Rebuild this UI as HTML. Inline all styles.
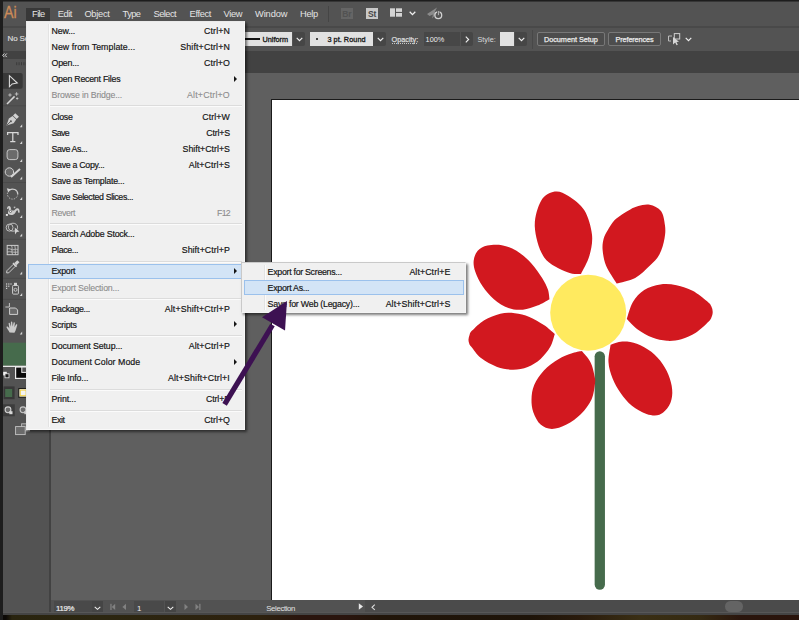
<!DOCTYPE html>
<html><head>
<meta charset="utf-8">
<style>
*{box-sizing:border-box;margin:0;padding:0}
html,body{width:799px;height:620px;overflow:hidden;background:#1b1b1b;font-family:"Liberation Sans",sans-serif;}
#app{position:absolute;left:0;top:0;width:799px;height:620px;overflow:hidden;background:#1d1d1d}
#app div,#app span,#app svg{position:absolute}
/* menubar */
#menubar{left:3px;top:2px;width:796px;height:26px;background:#535353}
#topblend{left:3px;top:1px;width:796px;height:1px;background:#363636}
#mline{left:0;top:24.4px;width:796px;height:1.2px;background:#494949}
#menubar span{top:4.7px;font-size:9.3px;line-height:14px;color:#e4e4e4;white-space:nowrap}
#ai{left:0.6px;top:-1.7px;font-size:16.5px;line-height:24px;color:#cd8b58;letter-spacing:0;transform:scaleX(.86);transform-origin:0 0;-webkit-text-stroke:0.3px #cd8b58}
/* control bar */
#ctrl{left:3px;top:28px;width:796px;height:23px;background:#535353}
#ctrl .t{font-size:8px;line-height:10px;color:#dadada;white-space:nowrap;top:7px}
.fld{background:#e1e1e1;color:#161616;font-size:8px;line-height:14px;white-space:nowrap;height:14px;top:4px}
.dfld{background:#474747;color:#e6e6e6;font-size:8px;line-height:14px;white-space:nowrap;height:14px;top:4px}
.cbtn{background:#464646;height:14px;top:4px;width:12px;border-radius:0 2px 2px 0}
.btn{border:1px solid #787878;border-radius:2px;color:#e6e6e6;font-size:8px;line-height:12px;height:14px;top:4px;text-align:center;white-space:nowrap;background:#4d4d4d}
/* strips */
#strip{left:3px;top:51px;width:796px;height:22px;background:#424242}
#canvas{left:51px;top:73px;width:748px;height:527px;background:#5f5f5f}
#artboard{left:271px;top:99px;width:528px;height:501px;background:#fff;border-left:1.5px solid #1a1a1a;border-top:1.5px solid #1a1a1a}
#tools{left:3px;top:59px;width:46px;height:553px;background:#535353}
#tsep{left:49px;top:73px;width:2px;height:539px;background:#424242}
#status{left:51px;top:600px;width:748px;height:12px;background:#4b4b4b}
#bottom{left:0;top:612px;width:799px;height:8px;background:linear-gradient(#575757 0,#575757 1.2px,#444 1.2px,#444 2.8px,#1b0e05 2.8px,#1b0e05 100%)}
#bottom2{left:0;top:614.8px;width:799px;height:5.2px;background:linear-gradient(90deg,#0c0906 0,#0c0906 6px,#29240f 12px,#2c2610 100px,#2d210e 260px,#2a150e 300px,#2a150e 345px,#211509 380px,#1e1409 530px,#2a1b0c 580px,#3a2f14 640px,#352a12 700px,#2a150c 740px,#2a140c 799px)}
#bottom3{left:0;top:612px;width:3px;height:8px;background:#1d1d1d}
/* menu */
.menu{background:#f0f0f0;border:1px solid #eaeaea;border-right-color:#f8f8f8;border-bottom-color:#f8f8f8;box-shadow:1.5px 1.5px 2.5px rgba(0,0,0,.52)}
.menu .g{left:21px;top:2px;bottom:2px;background:#e3e3e3;border-right:1px solid #fbfbfb;width:2px}
.mi{left:0;right:0;height:16px;font-size:8.8px;line-height:16px;color:#141414;white-space:nowrap;-webkit-text-stroke:0.18px #141414}
.mi .l{left:24.5px;top:0}
.mi .r{right:14.1px;top:0}
.mi.dis{color:#8c8c8c;-webkit-text-stroke:0.1px #8c8c8c}
.sep{left:23px;right:2px;background:#dcdcdc;border-bottom:1px solid #fbfbfb;height:2px}
.arr{right:7.3px;top:4.6px;width:0;height:0;border-left:3.6px solid #161616;border-top:3.1px solid transparent;border-bottom:3.1px solid transparent}
.hl{background:#d3e4f6;border:1px solid #9bc1ec}
</style>
</head>
<body>
<div id="app">
  <div id="topblend"></div>
  <div id="menubar">
    <div id="mline"></div><div id="ai">Ai</div>
    <div id="filehl" style="left:23px;top:5.8px;width:24px;height:12.8px;background:#383838"></div>
    <span style="left: 29.1px; letter-spacing: -0.621px;">File</span>
    <span style="left: 54.8px; letter-spacing: -0.483px;">Edit</span>
    <span style="left: 81.4px; letter-spacing: -0.279px;">Object</span>
    <span style="left: 119.6px; letter-spacing: -0.589px;">Type</span>
    <span style="left: 150.6px; letter-spacing: -0.574px;">Select</span>
    <span style="left: 186.6px; letter-spacing: -0.368px;">Effect</span>
    <span style="left: 220.6px; letter-spacing: -0.396px;">View</span>
    <span style="left: 252px; letter-spacing: -0.113px;">Window</span>
    <span style="left: 297px; letter-spacing: -0.281px;">Help</span>
    <div style="left:325px;top:4px;width:1px;height:16px;background:#454545"></div>
    <div style="left:337.5px;top:6.3px;width:12px;height:10.6px;background:#656565"></div>
<span style="left:339.2px;top:4.8px;font-size:8.5px;color:#525252;font-weight:bold;letter-spacing:-0.2px">Br</span>
<div style="left:363px;top:6.3px;width:11.8px;height:10.6px;background:#c9c9c9"></div>
<span style="left:365px;top:4.8px;font-size:8.5px;color:#474747;font-weight:bold;letter-spacing:-0.2px">St</span>
<svg style="left:387px;top:5.5px" width="13" height="10" viewBox="0 0 13 10">
  <rect x="0" y="0.3" width="5" height="8.4" fill="#d4d4d4"></rect><rect x="6" y="0.3" width="6" height="3.6" fill="#d4d4d4"></rect><rect x="6" y="5" width="6" height="3.7" fill="#d4d4d4"></rect>
</svg>
<svg style="left:405.5px;top:9px" width="7" height="5" viewBox="0 0 7 5"><path d="M0.7,0.8 L3.5,3.6 L6.3,0.8" fill="none" stroke="#f0f0f0" stroke-width="1.3"></path></svg>
<svg style="left:423px;top:4px" width="18" height="15" viewBox="0 0 18 15">
  <path d="M1,8 L11,1.5 L8.5,6.5 L12,6 L6,12.5 L7,8.5 L3.5,10 Z" fill="#8a8a8a"></path>
  <circle cx="12.3" cy="9.3" r="3.4" fill="#535353" stroke="#d2d2d2" stroke-width="1.3"></circle>
  <rect x="11.6" y="4.5" width="1.5" height="5" fill="#d2d2d2" stroke="#535353" stroke-width="0.8"></rect>
</svg>

  </div>
  <div id="ctrl">
    <span class="t" style="left:4.5px;top:6px;font-size:8px;letter-spacing:-0.15px;-webkit-text-stroke:0.2px #dadada">No Selection</span>
<div class="fld" style="left:237px;width:52px"></div>
<div style="left:237px;top:10px;width:19.6px;height:2.2px;background:#111"></div>
<span class="t" style="left: 259.4px; top: 6.5px; color: rgb(22, 22, 22); font-size: 7.3px; -webkit-text-stroke: 0.3px rgb(22, 22, 22); letter-spacing: 0.036px;">Uniform</span>
<div class="cbtn" style="left:290px"></div>
<svg style="left:293px;top:9px" width="7" height="5" viewBox="0 0 7 5"><path d="M0.7,0.8 L3.5,3.6 L6.3,0.8" fill="none" stroke="#f0f0f0" stroke-width="1.15"></path></svg>
<div class="fld" style="left:307px;width:62.5px"></div>
<div style="left:313.3px;top:10.3px;width:1.6px;height:1.6px;border-radius:1px;background:#111"></div>
<span class="t" style="left: 324.4px; top: 6.5px; color: rgb(22, 22, 22); font-size: 7.3px; -webkit-text-stroke: 0.3px rgb(22, 22, 22); letter-spacing: 0.042px;">3 pt. Round</span>
<div class="cbtn" style="left:370.3px;width:12.5px"></div>
<svg style="left:373.5px;top:9px" width="7" height="5" viewBox="0 0 7 5"><path d="M0.7,0.8 L3.5,3.6 L6.3,0.8" fill="none" stroke="#f0f0f0" stroke-width="1.15"></path></svg>
<span class="t" style="left: 388.6px; top: 6.5px; font-size: 7.3px; -webkit-text-stroke: 0.25px rgb(218, 218, 218); letter-spacing: -0.021px;">Opacity:</span>
<div style="left:388.6px;top:15px;width:26px;height:1px;background:repeating-linear-gradient(90deg,#c8c8c8 0,#c8c8c8 1px,transparent 1px,transparent 2px)"></div>
<div class="dfld" style="left:420.5px;width:36.5px"></div>
<span class="t" style="left: 422.6px; top: 6.5px; color: rgb(236, 236, 236); font-size: 7.3px; letter-spacing: -0.018px;">100%</span>
<div class="cbtn" style="left:458px"></div>
<svg style="left:461.5px;top:7.5px" width="5" height="7" viewBox="0 0 5 7"><path d="M0.8,0.7 L3.6,3.5 L0.8,6.3" fill="none" stroke="#f0f0f0" stroke-width="1.15"></path></svg>
<span class="t" style="left: 474.4px; top: 6.5px; font-size: 7.3px; letter-spacing: 0.025px;">Style:</span>
<div class="fld" style="left:496.7px;width:14.3px"></div>
<div class="cbtn" style="left:511.7px"></div>
<svg style="left:514.5px;top:9px" width="7" height="5" viewBox="0 0 7 5"><path d="M0.7,0.8 L3.5,3.6 L6.3,0.8" fill="none" stroke="#f0f0f0" stroke-width="1.15"></path></svg>
<div style="left:529px;top:2px;width:1px;height:19px;background:#484848"></div>
<div class="btn" style="left:534.3px;width:67.5px"></div><span class="t" style="left: 541px; top: 6.5px; font-size: 7.3px; color: rgb(236, 236, 236); -webkit-text-stroke: 0.25px rgb(236, 236, 236); letter-spacing: -0.04px;">Document Setup</span>
<div class="btn" style="left:605.3px;width:52.5px"></div><span class="t" style="left: 612.6px; top: 6.5px; font-size: 7.3px; color: rgb(236, 236, 236); -webkit-text-stroke: 0.25px rgb(236, 236, 236); letter-spacing: -0.14px;">Preferences</span>
<svg style="left:664.5px;top:4.5px" width="14" height="13" viewBox="0 0 14 13">
  <rect x="6.3" y="0.6" width="5.4" height="5.4" fill="none" stroke="#cfcfcf" stroke-width="1"></rect>
  <path d="M0.5,3 H4 M0.5,3 V8 M0.5,8 H3" fill="none" stroke="#bdbdbd" stroke-width="1"></path>
  <path d="M5,4 L5,11.5 L7.2,9.5 L8.6,12.3 L9.8,11.7 L8.5,9 L11,8.8 Z" fill="#d8d8d8"></path>
</svg>
<svg style="left:682px;top:9px" width="7" height="5" viewBox="0 0 7 5"><path d="M0.7,0.8 L3.5,3.6 L6.3,0.8" fill="none" stroke="#f0f0f0" stroke-width="1.15"></path></svg>

  </div>
  <div id="strip"><svg style="left:-0.6px;top:2.3px" width="6" height="5" viewBox="0 0 6 5"><path d="M2.4,0.5 L0.6,2.3 L2.4,4.1 M4.8,0.5 L3,2.3 L4.8,4.1" fill="none" stroke="#dcdcdc" stroke-width="1"></path></svg></div>
  <div id="canvas"></div>
  <div id="artboard"></div>
  <svg style="left:0;top:0" width="799" height="620" viewBox="0 0 799 620">
  <defs><clipPath id="abclip"><rect x="272.5" y="100.5" width="527" height="499.5"></rect></clipPath></defs>
  <g clip-path="url(#abclip)">
  <line x1="599.8" y1="356.3" x2="599.8" y2="584.6" stroke="#466b4c" stroke-width="10.3" stroke-linecap="round"></line>
  <g fill="#d2181f">
    <path d="M581.0,274.0 C582.4,271.0 587.6,262.3 589.4,255.8 C591.2,249.3 592.8,242.3 592.0,234.8 C591.2,227.3 588.4,217.1 584.5,210.6 C580.6,204.1 573.4,199.2 568.4,196.0 C563.4,192.8 559.3,190.8 554.7,191.6 C550.1,192.4 544.3,195.1 541.0,201.0 C537.7,206.9 534.3,217.4 534.8,226.8 C535.3,236.2 538.9,249.9 544.2,257.4 C549.5,264.9 560.7,269.2 566.8,272.0 C572.9,274.8 578.6,273.7 581.0,274.0Z"></path>
    <path d="M616.6,283.5 C614.9,280.6 608.4,271.4 606.1,265.8 C603.8,260.2 603.0,254.3 602.6,249.7 C602.2,245.1 602.9,241.6 603.7,238.4 C604.6,235.2 606.0,233.3 607.7,230.3 C609.5,227.3 611.8,223.3 614.2,220.6 C616.6,217.9 619.6,216.1 622.3,214.2 C625.0,212.3 627.6,210.8 630.3,209.4 C633.0,208.1 635.2,206.9 638.4,206.1 C641.6,205.3 645.9,204.0 649.7,204.8 C653.5,205.6 658.5,207.6 661.0,211.0 C663.5,214.4 664.4,220.9 665.0,225.5 C665.6,230.1 665.4,233.6 664.5,238.4 C663.6,243.2 661.9,249.9 659.4,254.5 C656.9,259.1 653.7,261.9 649.7,265.8 C645.7,269.7 640.7,274.9 635.2,277.9 C629.7,280.8 619.7,282.6 616.6,283.5Z"></path>
    <path d="M626.8,319.0 C627.8,316.2 630.0,306.9 632.9,302.1 C635.8,297.3 639.6,292.9 644.2,290.0 C648.8,287.1 654.9,285.2 660.3,284.4 C665.7,283.6 671.1,284.1 676.5,285.2 C681.9,286.3 687.5,288.1 692.6,290.8 C697.7,293.5 704.0,298.7 707.1,301.3 C710.2,303.9 710.4,304.6 711.3,306.3 C712.2,308.1 712.7,310.0 712.7,311.8 C712.8,313.6 712.3,315.4 711.6,317.0 C710.9,318.6 711.3,318.9 708.7,321.5 C706.1,324.1 700.4,329.8 695.8,332.7 C691.2,335.6 686.1,337.8 681.3,339.2 C676.5,340.6 671.6,341.1 666.8,340.8 C662.0,340.5 657.1,339.5 652.3,337.6 C647.4,335.7 642.0,332.6 637.7,329.5 C633.5,326.4 628.6,320.8 626.8,319.0Z"></path>
    <path d="M610.6,344.8 C612.5,344.3 617.9,341.8 622.3,341.6 C626.7,341.4 632.0,342.0 636.8,343.7 C641.6,345.4 647.0,348.4 651.3,351.8 C655.6,355.2 659.5,359.5 662.6,363.9 C665.7,368.3 668.2,373.6 669.8,378.4 C671.4,383.2 672.4,388.3 672.3,392.9 C672.2,397.5 671.1,402.2 669.0,405.8 C666.9,409.4 663.1,413.4 659.4,414.7 C655.6,416.0 651.1,415.4 646.5,413.9 C641.9,412.4 636.2,409.3 631.9,405.8 C627.6,402.3 623.8,397.5 620.6,392.9 C617.4,388.3 614.6,383.5 612.6,378.4 C610.6,373.3 608.8,367.9 608.5,362.3 C608.2,356.7 610.2,347.7 610.6,344.8Z"></path>
    <path d="M581.8,351.1 C583.3,353.0 588.5,358.1 590.6,362.4 C592.8,366.7 594.0,373.4 594.7,376.9 C595.4,380.4 595.5,379.6 595.0,383.4 C594.5,387.2 593.8,394.4 591.5,399.5 C589.2,404.6 585.2,409.8 581.0,414.0 C576.8,418.2 571.4,422.0 566.5,424.5 C561.6,427.0 556.2,428.9 551.9,428.9 C547.6,428.9 543.7,427.2 540.6,424.5 C537.5,421.8 534.9,416.6 533.4,412.4 C531.9,408.2 531.4,404.1 531.5,399.5 C531.6,394.9 532.1,389.8 534.2,385.0 C536.3,380.2 539.9,374.8 543.9,370.5 C547.9,366.2 553.8,362.0 558.4,359.2 C563.0,356.4 567.4,354.9 571.3,353.5 C575.2,352.1 580.0,351.5 581.8,351.1Z"></path>
    <path d="M554.8,333.9 C554.0,336.0 552.7,342.6 550.3,346.8 C547.9,351.0 544.4,355.5 540.6,358.9 C536.8,362.2 532.3,365.1 527.7,366.9 C523.1,368.7 518.3,369.7 513.2,369.7 C508.1,369.7 502.5,368.8 497.1,366.9 C491.7,365.0 485.3,361.5 481.0,358.1 C476.7,354.8 473.3,349.2 471.3,346.8 C469.3,344.4 469.7,344.6 469.2,343.4 C468.7,342.2 468.4,340.9 468.5,339.5 C468.6,338.1 469.0,336.3 469.6,334.8 C470.2,333.3 469.7,333.0 472.1,330.6 C474.5,328.2 479.5,323.0 484.2,320.2 C488.9,317.4 495.2,314.9 500.3,313.7 C505.4,312.5 509.9,312.7 514.8,313.2 C519.6,313.7 524.5,314.9 529.4,316.9 C534.2,318.9 539.7,322.2 543.9,325.0 C548.1,327.8 553.0,332.4 554.8,333.9Z"></path>
    <path d="M549.5,299.2 C547.5,300.3 541.8,303.9 537.4,305.6 C533.0,307.4 527.7,309.3 522.9,309.7 C518.1,310.1 513.2,309.9 508.4,308.1 C503.6,306.4 498.2,302.8 493.9,299.2 C489.6,295.6 485.7,290.9 482.6,286.3 C479.5,281.7 476.8,276.1 475.3,271.8 C473.8,267.5 473.3,264.0 473.7,260.5 C474.1,257.0 475.4,253.3 477.7,250.8 C480.0,248.3 483.4,246.5 487.4,245.6 C491.4,244.7 497.0,244.3 501.9,245.2 C506.8,246.1 511.6,247.9 516.5,250.8 C521.4,253.8 526.7,258.3 531.0,262.9 C535.3,267.5 539.5,273.8 542.3,278.2 C545.1,282.6 546.7,286.0 547.9,289.5 C549.1,293.0 549.2,297.6 549.5,299.2Z"></path>
  </g>
  <circle cx="588.2" cy="312.7" r="38" fill="#ffea5f"></circle>
  </g>
</svg>
  <div id="tools">
    <svg style="left:0;top:0" width="46" height="553" viewBox="3 59 46 553">
  <defs><path id="fl" d="M2.4,-0.5 V2.4 H0 Z" fill="#d6d6d6"></path></defs>
  <!-- grip -->
  <g fill="#3b3b3b"><rect x="16.2" y="62.2" width="1" height="3"></rect><rect x="18.6" y="62.2" width="1" height="3"></rect><rect x="21" y="62.2" width="1" height="3"></rect><rect x="23.4" y="62.2" width="1" height="3"></rect><rect x="25.8" y="62.2" width="1" height="3"></rect></g>
  <!-- selection tool (selected) -->
  <path d="M3,73 H20.7 a2,2 0 0 1 2,2 V86.7 a2,2 0 0 1 -2,2 H3 Z" fill="#383838"></path>
  <path d="M9.4,75.6 L9.4,86.8 L12.2,83.9 L17.3,83 Z" fill="none" stroke="#dcdcdc" stroke-width="1.05" stroke-linejoin="miter"></path>
  <!-- magic wand -->
  <path d="M7,104 L14.6,96.4" stroke="#d6d6d6" stroke-width="1.5" fill="none"></path>
  <g stroke="#d0d0d0" stroke-width="0.8" fill="none">
    <path d="M10,93.3 V96.7 M8.3,95 H11.7"></path>
    <path d="M16.6,92.2 V95.8 M14.8,94 H18.4"></path>
    <path d="M17.2,97.3 V99.7 M16,98.5 H18.4"></path>
  </g>
  <!-- separator -->
  <rect x="3" y="105.3" width="23" height="1" fill="#4a4a4a"></rect>
  <!-- pen -->
  <g transform="translate(12.3 119.8) rotate(45)">
    <path d="M-2.6,-6.8 H2.6 V-3.6 H-2.6 Z" fill="#d2d2d2"></path>
    <path d="M-2.6,-2.9 H2.6 L3.4,1.5 L0,8.2 L-3.4,1.5 Z" fill="#cfcfcf"></path>
    <path d="M0,7.5 V2.6" stroke="#535353" stroke-width="0.9"></path>
    <circle cx="0" cy="2" r="1" fill="#535353"></circle>
  </g>
  <use href="#fl" x="19.8" y="124.8"></use>
  <!-- type -->
  <path d="M7.6,135 V132.7 H18 V135 M12.8,132.7 V141.6 M10.2,141.7 H15.4" fill="none" stroke="#d8d8d8" stroke-width="1.25"></path>
  <use href="#fl" x="19.8" y="141.6"></use>
  <!-- rounded rect -->
  <rect x="7.1" y="149.6" width="10.8" height="10" rx="2.6" fill="#6b6b6b" stroke="#c6c6c6" stroke-width="1"></rect>
  <use href="#fl" x="19.8" y="159.6"></use>
  <!-- shaper -->
  <circle cx="9.4" cy="172" r="4.2" fill="#6b6b6b" stroke="#d0d0d0" stroke-width="1"></circle>
  <path d="M11,177 L20,169" stroke="#d4d4d4" stroke-width="2" fill="none"></path>
  <use href="#fl" x="19.8" y="177"></use>
  <rect x="3" y="182" width="23" height="1" fill="#4a4a4a"></rect>
  <!-- rotate -->
  <path d="M9.4,190.2 A5.2,5.2 0 0 1 17.8,194" fill="none" stroke="#cfcfcf" stroke-width="1.2"></path>
  <path d="M17.8,194 A5.2,5.2 0 1 1 7.6,192.5" fill="none" stroke="#bdbdbd" stroke-width="1" stroke-dasharray="1.4 1.2"></path>
  <path d="M6.8,188.3 L10.9,189.3 L8.2,192.4 Z" fill="#d4d4d4"></path>
  <use href="#fl" x="19.8" y="197.6"></use>
  <!-- puppet/warp -->
  <path d="M7.1,208.9 C6.9,206.8 8.1,205.7 9.3,205.9 C10.7,206.2 10.9,208 11.1,209.5 C11.6,210.5 13,210.8 14,210.4 C15,210 15.6,208.5 17.1,208.3 C19,208.1 19.9,210 19.6,212.7 L18,212.6 C18.1,211 17.8,210.2 17.2,210.3 C16.2,210.5 15.8,212.5 14.6,213.7 C13,215.3 10,215.3 8.4,214.1 C7.4,213.1 8.2,211.5 8.8,210 C9,209 8.9,207.8 8.6,207.7 C8.3,207.7 8.4,208.4 8.4,209 Z" fill="#cdcdcd"></path>
  <circle cx="10.5" cy="211.4" r="1.1" fill="#f4f4f4" stroke="#555" stroke-width="0.8"></circle>
  <circle cx="14.6" cy="207.3" r="0.9" fill="#dadada" stroke="#666" stroke-width="0.5"></circle>
  <rect x="5.9" y="214" width="2" height="1.9" fill="#e6e6e6"></rect>
  <use href="#fl" x="19.8" y="215.6"></use>
  <!-- shape builder -->
  <ellipse cx="9.6" cy="227.6" rx="3.4" ry="3.6" fill="none" stroke="#c8c8c8" stroke-width="0.9"></ellipse>
  <ellipse cx="13" cy="227.2" rx="4.6" ry="4" fill="none" stroke="#c8c8c8" stroke-width="0.9"></ellipse>
  <path d="M14.8,227.6 L19.4,231.6 L16.8,232 L15,234.4 Z" fill="#d2d2d2"></path>
  <use href="#fl" x="19.8" y="234"></use>
  <rect x="3" y="238.8" width="23" height="1" fill="#4a4a4a"></rect>
  <!-- mesh -->
  <g fill="none" stroke="#cdcdcd">
    <rect x="7.2" y="245.4" width="10.8" height="9.3" stroke-width="1"></rect>
    <path d="M7,249 C10,247.5 12,251 14.5,249.5 C16,248.8 17,249.5 18,250 M11.5,245.5 C13,248 11,251 12.5,254.5 M14.8,245.5 C15.5,248.5 15,251 15.5,254.5 M7,252 C10,251 14,253 18,252" stroke-width="0.8"></path>
  </g>
  <!-- eyedropper -->
  <g transform="translate(12.6 267) rotate(45)">
    <path d="M-1.4,-2.5 H1.4 V6.8 L0,8.4 L-1.4,6.8 Z" fill="#535353" stroke="#cfcfcf" stroke-width="0.9"></path>
    <rect x="-2.5" y="-4" width="5" height="1.7" fill="#d2d2d2"></rect>
    <path d="M-1.5,-8.2 H1.5 V-4 H-1.5 Z" fill="#d2d2d2"></path>
  </g>
  <use href="#fl" x="19.8" y="272"></use>
  <rect x="3" y="277.8" width="23" height="1" fill="#4a4a4a"></rect>
  <!-- symbol sprayer -->
  <rect x="12.6" y="285.5" width="5.8" height="8.6" rx="0.8" fill="#535353" stroke="#cfcfcf" stroke-width="1"></rect>
  <rect x="14" y="282.8" width="3" height="2.2" fill="#d2d2d2"></rect>
  <circle cx="15.5" cy="289.8" r="1.5" fill="none" stroke="#cfcfcf" stroke-width="0.9"></circle>
  <g fill="#d6d6d6"><rect x="6" y="283.4" width="1.2" height="1.2"></rect><rect x="8.2" y="283.4" width="1.2" height="1.2"></rect><rect x="10.4" y="283.4" width="1.2" height="1.2"></rect><rect x="6" y="285.6" width="1.2" height="1.2"></rect><rect x="8.2" y="285.6" width="1.2" height="1.2"></rect><rect x="6" y="287.8" width="1.2" height="1.2"></rect></g>
  <use href="#fl" x="19.8" y="293.6"></use>
  <rect x="3" y="298.8" width="23" height="1" fill="#4a4a4a"></rect>
  <!-- artboard -->
  <path d="M5.4,307 H9 M9.4,303 V307" stroke="#d0d0d0" stroke-width="0.9" fill="none"></path>
  <path d="M9.6,308 H15.6 L17.6,310 V314.4 H9.6 Z" fill="#6b6b6b" stroke="#cfcfcf" stroke-width="1"></path>
  <!-- hand -->
  <path d="M9.6,332.6 C8.6,330.5 7.2,328.8 6.6,327.6 C6.2,326.6 7.4,326.2 8.2,327 L9.4,328.4 L8.6,323.6 C8.5,322.7 9.7,322.5 9.9,323.4 L10.8,326.8 L10.9,322.2 C10.9,321.3 12.2,321.3 12.3,322.2 L12.6,326.6 L13.6,322.8 C13.8,322 15,322.2 14.9,323.1 L14.4,327.2 L16,324.6 C16.5,323.8 17.6,324.4 17.2,325.3 C16.5,327.2 16.2,329 15.6,330.6 C15.2,331.6 14.8,332.2 14.4,332.8 Z" fill="#cacaca"></path>
  <use href="#fl" x="19.8" y="332"></use>
  <!-- fill swatch -->
  <rect x="3" y="342.7" width="46" height="23" fill="#466b4c"></rect>
  <rect x="3" y="365.7" width="46" height="1.3" fill="#e8e8e8"></rect>
  <!-- default fill/stroke mini -->
  <rect x="3.2" y="371.8" width="3.6" height="3.6" fill="#f2f2f2"></rect>
  <rect x="5" y="373.8" width="4" height="4" fill="#1a1a1a" stroke="#e6e6e6" stroke-width="0.8"></rect>
  <!-- stroke box -->
  <rect x="15.6" y="367" width="12" height="11.4" fill="#0a0a0a" stroke="#ededed" stroke-width="1.2"></rect>
  <rect x="21.8" y="367" width="6" height="5.4" fill="#535353" stroke="#ededed" stroke-width="1"></rect>
  <!-- color mode buttons -->
  <rect x="3.6" y="386.4" width="11" height="12.8" fill="#383838"></rect>
  <rect x="5.2" y="389" width="7" height="8" fill="#466b4c"></rect>
  <rect x="18.8" y="388.6" width="9" height="8.6" fill="#fff6c8" stroke="#111" stroke-width="1"></rect>
  <rect x="20.4" y="390.2" width="5.6" height="5.4" fill="#f4f4f4" stroke="#f3d24a" stroke-width="0.8"></rect>
  <!-- draw modes -->
  <rect x="3" y="404.3" width="11.8" height="12" fill="#3c3c3c"></rect>
  <circle cx="8" cy="409.8" r="2.9" fill="#6b6b6b" stroke="#d0d0d0" stroke-width="1.1"></circle>
  <rect x="9.3" y="411.2" width="3.2" height="3" fill="#d8d8d8"></rect>
  <circle cx="23" cy="409.8" r="2.9" fill="#6b6b6b" stroke="#c8c8c8" stroke-width="1.1"></circle>
  <rect x="24.3" y="411.2" width="3.2" height="3" fill="#cfcfcf"></rect>
  <!-- screen mode -->
  <rect x="21.6" y="423.8" width="8" height="7" fill="#6b6b6b" stroke="#bcbcbc" stroke-width="0.9"></rect>
  <rect x="15.6" y="426.6" width="9.6" height="8" fill="#6b6b6b" stroke="#c4c4c4" stroke-width="0.9"></rect>
</svg>

  </div>
  <div id="tsep"></div>
  <div id="status">
    <div style="left:0;top:0;width:314px;height:12px;background:#525252"></div>
<div style="left:2.5px;top:1px;width:38px;height:11px;background:#494949"></div>
<span style="left: 5px; top: 3.8px; font-size: 7.8px; line-height: 10px; color: rgb(236, 236, 236); -webkit-text-stroke: 0.2px rgb(236, 236, 236); letter-spacing: -0.294px;">119%</span>
<div style="left:41.3px;top:1px;width:11.2px;height:11px;background:#454545"></div>
<svg style="left:42.6px;top:6px" width="7" height="5" viewBox="0 0 7 5"><path d="M0.7,0.8 L3.5,3.3 L6.3,0.8" fill="none" stroke="#f0f0f0" stroke-width="1.05"></path></svg>
<svg style="left:58.3px;top:3.4px" width="24" height="8" viewBox="0 0 24 8"><g fill="#818181"><rect x="1.3" y="0.8" width="1.3" height="6.2"></rect><path d="M6.2,0.8 V7 L2.8,3.9Z"></path><path d="M17,0.8 V7 L13.4,3.9Z"></path></g></svg>
<div style="left:83.3px;top:1px;width:29.5px;height:11px;background:#494949"></div>
<span style="left:86px;top:3.8px;font-size:7.8px;line-height:10px;color:#ececec">1</span>
<div style="left:113.5px;top:1px;width:11.5px;height:11px;background:#454545"></div>
<svg style="left:115.6px;top:6px" width="7" height="5" viewBox="0 0 7 5"><path d="M0.7,0.8 L3.5,3.3 L6.3,0.8" fill="none" stroke="#f0f0f0" stroke-width="1.05"></path></svg>
<svg style="left:131px;top:3.4px" width="24" height="8" viewBox="0 0 24 8"><g fill="#818181"><path d="M2.5,0.8 V7 L6,3.9Z"></path><path d="M13.5,0.8 V7 L17,3.9Z"></path><rect x="17.2" y="0.8" width="1.3" height="6.2"></rect></g></svg>
<span style="left: 215.3px; top: 3.8px; font-size: 7.8px; line-height: 10px; color: rgb(226, 226, 226); letter-spacing: -0.375px;">Selection</span>
<svg style="left:307px;top:3.3px" width="6" height="7" viewBox="0 0 6 7"><path d="M0.8,0.3 V6.7 L5,3.5Z" fill="#e8e8e8"></path></svg>
<svg style="left:319.5px;top:3.5px" width="5" height="7" viewBox="0 0 5 7"><path d="M3.8,0.7 L1,3.3 L3.8,5.9" fill="none" stroke="#dcdcdc" stroke-width="1.1"></path></svg>
<div style="left:673.7px;top:1.2px;width:18.5px;height:10.6px;border-radius:5.3px;background:#646464"></div>

  </div>
  <div id="bottom"></div><div id="bottom2"></div><div id="bottom3"></div>
  <div class="menu" style="left:26px;top:21px;width:219px;height:409px">
<div class="g"></div>
<div class="mi" style="top:0.95px"><span class="l" style="letter-spacing:-0.126px">New...</span><span class="r" style="letter-spacing:0.105px">Ctrl+N</span></div>
<div class="mi" style="top:16.95px"><span class="l" style="letter-spacing:0.037px">New from Template...</span><span class="r" style="letter-spacing:0.140px">Shift+Ctrl+N</span></div>
<div class="mi" style="top:32.95px"><span class="l" style="letter-spacing:-0.194px">Open...</span><span class="r" style="letter-spacing:0.021px">Ctrl+O</span></div>
<div class="mi" style="top:48.95px"><span class="l" style="letter-spacing:-0.239px">Open Recent Files</span><div class="arr"></div></div>
<div class="mi dis" style="top:64.95px"><span class="l" style="letter-spacing:-0.176px">Browse in Bridge...</span><span class="r" style="letter-spacing:0.182px">Alt+Ctrl+O</span></div>
<div class="sep" style="top:83.20px"></div>
<div class="mi" style="top:86.85px"><span class="l" style="letter-spacing:-0.280px">Close</span><span class="r" style="letter-spacing:0.079px">Ctrl+W</span></div>
<div class="mi" style="top:102.75px"><span class="l" style="letter-spacing:-0.616px">Save</span><span class="r" style="letter-spacing:-0.165px">Ctrl+S</span></div>
<div class="mi" style="top:118.85px"><span class="l" style="letter-spacing:-0.391px">Save As...</span><span class="r" style="letter-spacing:-0.003px">Shift+Ctrl+S</span></div>
<div class="mi" style="top:134.75px"><span class="l" style="letter-spacing:-0.289px">Save a Copy...</span><span class="r" style="letter-spacing:0.111px">Alt+Ctrl+S</span></div>
<div class="mi" style="top:150.65px"><span class="l" style="letter-spacing:-0.216px">Save as Template...</span></div>
<div class="mi" style="top:166.85px"><span class="l" style="letter-spacing:-0.360px">Save Selected Slices...</span></div>
<div class="mi dis" style="top:182.75px"><span class="l" style="letter-spacing:-0.370px">Revert</span><span class="r" style="letter-spacing:-0.757px">F12</span></div>
<div class="sep" style="top:200.60px"></div>
<div class="mi" style="top:204.05px"><span class="l" style="letter-spacing:-0.193px">Search Adobe Stock...</span></div>
<div class="mi" style="top:220.15px"><span class="l" style="letter-spacing:-0.343px">Place...</span><span class="r" style="letter-spacing:0.064px">Shift+Ctrl+P</span></div>
<div class="sep" style="top:239.20px"></div>
<div class="hl" style="left:1px;right:1.5px;top:242.20px;height:15.2px"></div>
<div class="mi" style="top:241.45px"><span class="l" style="letter-spacing:-0.290px">Export</span><div class="arr"></div></div>
<div class="mi dis" style="top:257.55px"><span class="l" style="letter-spacing:-0.189px">Export Selection...</span></div>
<div class="sep" style="top:275.90px"></div>
<div class="mi" style="top:278.75px"><span class="l" style="letter-spacing:-0.308px">Package...</span><span class="r" style="letter-spacing:0.147px">Alt+Shift+Ctrl+P</span></div>
<div class="mi" style="top:294.55px"><span class="l" style="letter-spacing:-0.242px">Scripts</span><div class="arr"></div></div>
<div class="sep" style="top:312.90px"></div>
<div class="mi" style="top:316.05px"><span class="l" style="letter-spacing:-0.115px">Document Setup...</span><span class="r" style="letter-spacing:0.111px">Alt+Ctrl+P</span></div>
<div class="mi" style="top:332.25px"><span class="l" style="letter-spacing:0.036px">Document Color Mode</span><div class="arr"></div></div>
<div class="mi" style="top:348.05px"><span class="l" style="letter-spacing:-0.160px">File Info...</span><span class="r" style="letter-spacing:0.162px">Alt+Shift+Ctrl+I</span></div>
<div class="sep" style="top:367.00px"></div>
<div class="mi" style="top:369.35px"><span class="l" style="letter-spacing:-0.115px">Print...</span><span class="r" style="letter-spacing:-0.115px">Ctrl+P</span></div>
<div class="sep" style="top:387.90px"></div>
<div class="mi" style="top:390.45px"><span class="l" style="letter-spacing:-0.443px">Exit</span><span class="r" style="letter-spacing:0.005px">Ctrl+Q</span></div>
</div>
  <div class="menu" style="left:241px;top:261.5px;width:224.5px;height:51px;border-color:#c9c9c9 #f4f4f4 #f4f4f4 #c9c9c9">
<div class="g" style="left:21.5px"></div>
<div class="hl" style="left:1.5px;right:1px;top:17.70px;height:15px"></div>
<div class="mi" style="top:1.15px"><span class="l" style="left:25.6px;letter-spacing:-0.285px">Export for Screens...</span><span class="r" style="letter-spacing:0.091px">Alt+Ctrl+E</span></div>
<div class="mi" style="top:17.15px"><span class="l" style="left:25.6px;letter-spacing:-0.274px">Export As...</span></div>
<div class="mi" style="top:33.05px"><span class="l" style="left:25.6px;letter-spacing:-0.223px">Save for Web (Legacy)...</span><span class="r" style="letter-spacing:0.122px">Alt+Shift+Ctrl+S</span></div>
</div>
  <svg style="left:0;top:0" width="799" height="620" viewBox="0 0 799 620">
  <line x1="224.6" y1="404.4" x2="272.5" y2="325" stroke="#3d1152" stroke-width="5.2"></line>
  <polygon points="287,301 262,317.2 285,330.5" fill="#3d1152"></polygon>
</svg>

</div>


</body></html>
